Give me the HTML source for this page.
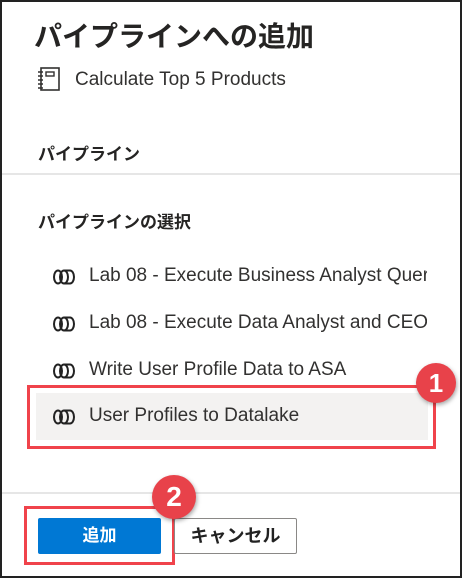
<!DOCTYPE html>
<html><head><meta charset="utf-8"><style>
*{margin:0;padding:0;box-sizing:border-box}
body{width:462px;height:578px;overflow:hidden;background:#fff;font-family:"Liberation Sans","Noto Sans CJK JP",sans-serif;color:#323130;position:relative}
.frame{position:absolute;left:0;top:0;width:462px;height:578px;border:2px solid #222}
.a{position:absolute;white-space:nowrap}
.row{position:absolute;left:53px;font-size:19px;color:#323130;white-space:nowrap;height:24px;width:380px}
.row svg{position:absolute;left:0;top:4px}
.row span{position:absolute;left:36px;top:0;width:338px;overflow:hidden;display:block;white-space:nowrap}
.badge{position:absolute;border-radius:50%;background:#e8424a;color:#fff;font-weight:bold;text-align:center;box-shadow:1px 2px 4px rgba(0,0,0,.35)}
</style></head><body>
<div class="a" style="left:34px;top:15px;font-size:28px;font-weight:bold;color:#252423">パイプラインへの追加</div>
<svg class="a" style="left:37px;top:67px" width="24" height="25" viewBox="0 0 24 25"><rect x="4" y="1" width="18" height="22" fill="none" stroke="#323130" stroke-width="1.6"/><rect x="9" y="5" width="8" height="4" fill="none" stroke="#323130" stroke-width="1.4"/><path d="M1 5h5M1 9h5M1 13h5M1 17h5M1 21h5" stroke="#323130" stroke-width="1.4"/></svg>
<div class="a" style="left:75px;top:69px;font-size:19px">Calculate Top 5 Products</div>
<div class="a" style="left:38px;top:140px;font-size:17px;font-weight:bold;color:#252423">パイプライン</div>
<div class="a" style="left:2px;top:173px;width:458px;height:2px;background:#e6e6e6"></div>
<div class="a" style="left:38px;top:208px;font-size:17px;font-weight:bold;color:#252423">パイプラインの選択</div>
<div class="a" style="left:36px;top:393px;width:392px;height:47px;background:#f3f2f1"></div>
<svg width="0" height="0" style="position:absolute"><defs><g id="pi"><ellipse cx="5" cy="8" rx="4" ry="6.5" fill="none" stroke="#222" stroke-width="2"/><ellipse cx="11" cy="8" rx="4" ry="6.5" fill="none" stroke="#222" stroke-width="2"/><path d="M11 1.5h6a4 6.5 0 0 1 0 13h-6" fill="none" stroke="#222" stroke-width="2"/></g></defs></svg>
<div class="row" style="top:265px"><svg width="24" height="17" viewBox="0 0 24 17"><use href="#pi"/></svg><span>Lab 08 - Execute Business Analyst Queries</span></div>
<div class="row" style="top:312px"><svg width="24" height="17" viewBox="0 0 24 17"><use href="#pi"/></svg><span>Lab 08 - Execute Data Analyst and CEO Queries</span></div>
<div class="row" style="top:359px"><svg width="24" height="17" viewBox="0 0 24 17"><use href="#pi"/></svg><span>Write User Profile Data to ASA</span></div>
<div class="row" style="top:405px"><svg width="24" height="17" viewBox="0 0 24 17"><use href="#pi"/></svg><span>User Profiles to Datalake</span></div>
<div class="a" style="left:27px;top:385px;width:409px;height:64px;border:3px solid #f0434b"></div>
<div class="badge" style="left:416px;top:363px;width:40px;height:40px;line-height:40px;font-size:26px">1</div>
<div class="a" style="left:2px;top:492px;width:458px;height:2px;background:#e6e6e6"></div>
<div class="a" style="left:24px;top:506px;width:151px;height:59px;border:3px solid #f0434b"></div>
<div class="a" style="left:38px;top:518px;width:123px;height:36px;background:#0078d4;border-radius:2px;color:#fff;font-size:17px;font-weight:bold;text-align:center;line-height:36px">追加</div>
<div class="a" style="left:174px;top:518px;width:123px;height:36px;border:1px solid #8a8886;border-radius:2px;color:#222;font-size:18px;font-weight:bold;text-align:center;line-height:34px">キャンセル</div>
<div class="badge" style="left:152px;top:475px;width:44px;height:44px;line-height:44px;font-size:28px">2</div>
<div class="frame"></div>
</body></html>
